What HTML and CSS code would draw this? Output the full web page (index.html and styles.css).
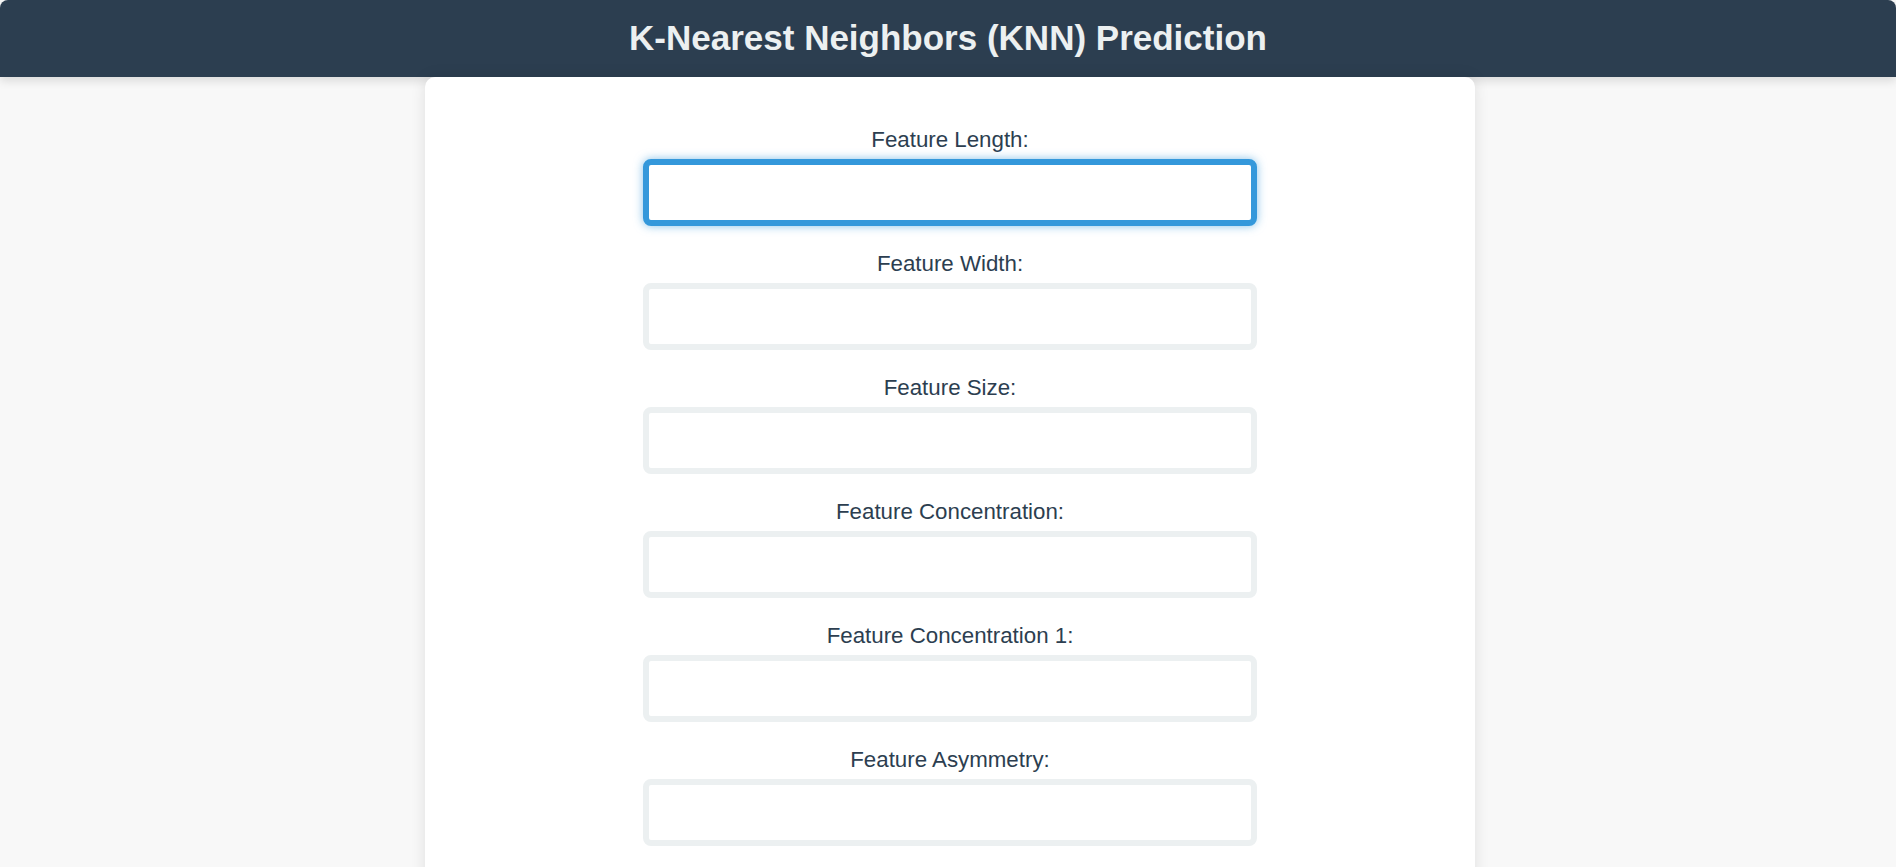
FILE: index.html
```html
<!DOCTYPE html>
<html lang="en">
<head>
<meta charset="utf-8">
<title>K-Nearest Neighbors (KNN) Prediction</title>
<link rel="stylesheet" href="styles.css">
</head>
<body>
<header class="site-header">
  <h1 class="site-title">K-Nearest Neighbors (KNN) Prediction</h1>
</header>
<main class="page">
  <form class="card">
    <div class="field">
      <label class="field-label" for="f1">Feature Length:</label>
      <input class="field-input is-focused" id="f1" type="text">
    </div>
    <div class="field">
      <label class="field-label" for="f2">Feature Width:</label>
      <input class="field-input" id="f2" type="text">
    </div>
    <div class="field">
      <label class="field-label" for="f3">Feature Size:</label>
      <input class="field-input" id="f3" type="text">
    </div>
    <div class="field">
      <label class="field-label" for="f4">Feature Concentration:</label>
      <input class="field-input" id="f4" type="text">
    </div>
    <div class="field">
      <label class="field-label" for="f5">Feature Concentration 1:</label>
      <input class="field-input" id="f5" type="text">
    </div>
    <div class="field">
      <label class="field-label" for="f6">Feature Asymmetry:</label>
      <input class="field-input" id="f6" type="text">
    </div>
  </form>
</main>
</body>
</html>
```

FILE: styles.css
```css
html, body {
  margin: 0;
  padding: 0;
}

body {
  background: #f8f8f8;
  font-family: "Liberation Sans", Arial, sans-serif;
  color: #2c3e50;
  overflow: hidden;
}

.site-header {
  background: #2c3e50;
  border-radius: 8px 8px 0 0;
  padding: 17px 0 19px;
  text-align: center;
  box-shadow: 0 4px 10px rgba(0, 0, 0, 0.12);
}

.site-title {
  margin: 0;
  font-size: 35px;
  line-height: 41px;
  font-weight: bold;
  color: #ecf0f1;
}

.page {
  display: flex;
  justify-content: center;
  padding-left: 4px;
}

.card {
  width: 1050px;
  box-sizing: border-box;
  background: #ffffff;
  border-radius: 10px;
  box-shadow: 0 0 15px rgba(0, 0, 0, 0.1);
  padding: 50px 0 60px;
  display: flex;
  flex-direction: column;
  align-items: center;
  gap: 25.6px;
}

.field {
  display: flex;
  flex-direction: column;
  align-items: center;
  width: 614px;
}

.field-label {
  display: block;
  font-size: 22.3px;
  line-height: 25px;
  margin-bottom: 7px;
  color: #2c3e50;
}

.field-input {
  display: block;
  width: 100%;
  height: 66.5px;
  box-sizing: border-box;
  border: 6.5px solid #ecf0f1;
  border-radius: 8px;
  background: #ffffff;
  padding: 0 12px;
  font-family: inherit;
  font-size: 22px;
  outline: none;
}

.field-input.is-focused,
.field-input:focus {
  border-color: #3498db;
  box-shadow: 0 0 10px rgba(52, 152, 219, 0.6);
}
```
